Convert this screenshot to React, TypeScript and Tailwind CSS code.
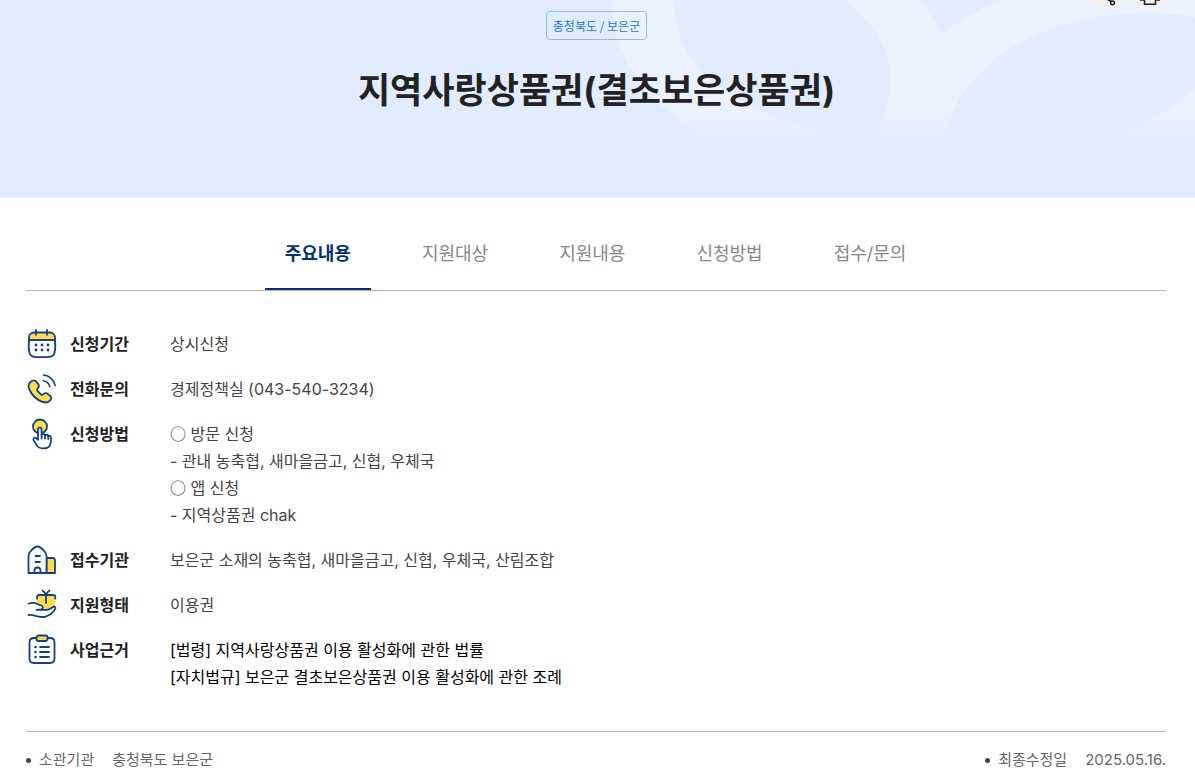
import type { ReactNode } from 'react';

const NAVY = '#12408a';
const YELLOW = '#ffdb4d';

function Icon({ children }: { children: ReactNode }) {
  return (
    <svg
      className="-mt-[3px] size-8 shrink-0"
      viewBox="0 0 32 32"
      fill="none"
      stroke={NAVY}
      strokeWidth="1.8"
      strokeLinecap="round"
      strokeLinejoin="round"
      aria-hidden="true"
    >
      {children}
    </svg>
  );
}

function CalendarIcon() {
  return (
    <Icon>
      <path d="M3 12V9.500a5 5 0 0 1 5-5h16a5 5 0 0 1 5 5V12z" fill={YELLOW} />
      <path d="M3 12C2.500 17 2.500 21 3.500 25c.6 2.400 2 3.500 5 3.800 5 .4 10 .4 15 0 3-.3 4.400-1.400 5-3.800 1-4 1-8 .5-13" />
      <path d="M10 1.800v5M21 1.800v5" />
      <path d="M10 17h.01M16 17h.01M22 17h.01M10 22h.01M16 22h.01M22 22h.01" strokeWidth="2.800" />
    </Icon>
  );
}

function PhoneIcon() {
  return (
    <Icon>
      <path
        d="M4.500 9C7 6.800 9 7 10.500 8.800l2 2.800c1 1.700.2 3-1 4.200-.7.8-.5 1.600.2 2.400l3 3c.8.700 1.600.8 2.400.2 1.300-1.100 2.500-1.900 4.200-.8l2.500 1.900c1.800 1.400 2 3 .4 4.900-2 2.300-5 2.600-8.400 1.200C10.500 26.500 6 22 3.600 17 2 13.800 2.200 11 4.500 9z"
        fill={YELLOW}
      />
      <path d="M17.500 2C23.500 2.500 28 6.800 29.200 12.500M17.200 7.800c3.400.4 5.800 2.600 6.600 6" strokeWidth="1.600" />
    </Icon>
  );
}

function TouchIcon() {
  return (
    <Icon>
      <circle cx="14" cy="8.500" r="7" fill={YELLOW} />
      <path
        d="M12 20V11.500c0-2.600 3.600-2.600 3.600 0V17c.4-1.500 3.200-1.400 3.400.5.6-1.300 3-1 3.200.9.700-1.100 2.900-.7 2.900 1.300 0 2.500 0 5-1 7.100-1 2.400-3.200 3.600-6.500 3.600-3.500 0-5.600-1-7-3.300L7.700 22.500c-.9-1.900.3-3.300 2-2.600l2.300 1.800z"
        fill="#fff"
      />
      <path d="M15.600 17v3.500M19 17.500v3M22.200 18.500v2.500" />
    </Icon>
  );
}

function BuildingIcon() {
  return (
    <Icon>
      <path d="M20.500 14h6c1.800 0 2.500.8 2.500 2.500V29h-8.500z" fill={YELLOW} />
      <path d="M2.500 29V12c0-2 .5-3.300 2-4.700C7 4.500 9 2.500 11.500 2.500s4.500 2 7 4.800c1.500 1.400 2 2.700 2 4.700v17z" fill="#fff" />
      <path d="M9.500 12h4.500M9.500 18h4.500M8.500 29v-2.500a3 3 0 0 1 6 0V29" />
    </Icon>
  );
}

function GiftIcon() {
  return (
    <Icon>
      <path d="M11 9.500C11 7 12 6 14 6h13c2 0 2.500 1 2.500 3L29 18c-1.200 2.600-3 3.500-6 3.500H14l-3-4z" fill={YELLOW} stroke="none" />
      <path d="M11 9.500V8c0-1.400.8-2 2-2h14c1.500 0 2.300.8 2.300 2v1.500M20 6v8M20 6c-.6-2-1.800-3.300-3.500-4.500M20 6c.6-2 1.800-3.300 3.500-4.500" />
      <path
        d="M2.500 14.500c4-1 7-.7 9.500.8 1.200.7 2.500 1 4.500.9h-1c1.500 3 .5 4.500-2 4.500H11h10c2.600-.3 4.400-2 6.500-3 1.500-.6 2.700.8 1.600 2.300C27 23.500 23.500 26.500 19 28c-5.500 1.200-10.500-2-16.500-2z"
        fill="#fff"
        stroke="none"
      />
      <path d="M2.500 14.500c4-1 7-.7 9.500.8 1.200.7 2.200 1 3.500 1.200 2 .7 1.500 3.700-.5 4L10.500 20.800M15 20.800h6c2.600-.3 4.400-2 6.500-3 1.500-.6 2.500.8 1.600 2.300C27 23.800 23.500 26.500 19 27.800c-5.500 1.200-10.500-2.300-16.500-1.800" />
    </Icon>
  );
}

function ClipboardIcon() {
  return (
    <Icon>
      <path d="M10.500 4H8C5 4 3.500 5.500 3.500 8.500v16c0 3 1.500 4.500 4.500 4.500h16c3 0 4.500-1.500 4.500-4.500v-16C28.500 5.500 27 4 24 4h-2.500" />
      <rect x="10.500" y="1.500" width="11" height="5.500" rx="2" fill={YELLOW} />
      <path d="M14 13h9M14 18h9M14 23h9" />
      <path d="M9.500 13h.01M9.500 18h.01M9.500 23h.01" strokeWidth="2.600" />
    </Icon>
  );
}

const tabs = ['주요내용', '지원대상', '지원내용', '신청방법', '접수/문의'];

function Bulleted({ children }: { children: ReactNode }) {
  return (
    <>
      <span className="font-['Noto_Sans_CJK_KR',sans-serif] font-medium leading-none">○</span> {children}
    </>
  );
}

const rows: { label: string; icon: ReactNode; lines: ReactNode[]; link?: boolean }[] = [
  { label: '신청기간', icon: <CalendarIcon />, lines: ['상시신청'] },
  { label: '전화문의', icon: <PhoneIcon />, lines: ['경제정책실 (043-540-3234)'] },
  {
    label: '신청방법',
    icon: <TouchIcon />,
    lines: [
      <Bulleted>방문 신청</Bulleted>,
      '- 관내 농축협, 새마을금고, 신협, 우체국',
      <Bulleted>앱 신청</Bulleted>,
      '- 지역상품권 chak',
    ],
  },
  { label: '접수기관', icon: <BuildingIcon />, lines: ['보은군 소재의 농축협, 새마을금고, 신협, 우체국, 산림조합'] },
  { label: '지원형태', icon: <GiftIcon />, lines: ['이용권'] },
  {
    label: '사업근거',
    icon: <ClipboardIcon />,
    lines: ['[법령] 지역사랑상품권 이용 활성화에 관한 법률', '[자치법규] 보은군 결초보은상품권 이용 활성화에 관한 조례'],
    link: true,
  },
];

function Rings() {
  return (
    <svg className="absolute right-0 top-0" width="595" height="140" viewBox="600 0 595 140" aria-hidden="true">
      <defs>
        <linearGradient id="fade" x1="0" y1="110" x2="0" y2="138" gradientUnits="userSpaceOnUse">
          <stop offset="0" stopColor="#eaf1ff" />
          <stop offset="1" stopColor="#e1ecff" />
        </linearGradient>
      </defs>
      <path d="M612 0C612 55 642 100 708 140H1195V0H1002Q968 13 942 34Q933 15 920 0Z" fill="url(#fade)" />
      <path d="M674 0C675 72 735 116 855 139L870 139C904 92 897 42 845 0Z" fill="#e1ecff" />
      <path d="M946 139C956 60 1060 -3 1195 17V89Q1163 117 1116 139Z" fill="#e1ecff" />
    </svg>
  );
}

export default function App() {
  return (
    <div className="bg-white font-['Inter','Noto_Sans_CJK_KR',sans-serif] text-[#222]">
      <header className="relative flex h-[198px] flex-col items-center bg-[#e1ecff] pr-[2px] pt-[11px]">
        <Rings />
        <div className="absolute right-[29px] top-0 flex gap-[10px]">
          <button aria-label="공유" className="flex h-3 w-8 items-start justify-center overflow-hidden rounded-b-xl bg-[#eff0f4]">
            <svg width="32" height="12" viewBox="0 0 32 12" fill="none" stroke="#222" strokeWidth="1.500" aria-hidden="true">
              <path d="M14.500 -1.500L19 1.500" strokeWidth="2" />
              <circle cx="20.500" cy="2.800" r="1.900" />
            </svg>
          </button>
          <button aria-label="인쇄" className="flex h-3 w-8 items-start justify-center overflow-hidden rounded-b-xl bg-[#eff0f4]">
            <svg width="32" height="12" viewBox="0 0 32 12" fill="none" stroke="#222" strokeWidth="1.500" aria-hidden="true">
              <path d="M6 0h4.500M21.500 0H26M10.500 -2V4.300h11V-2" />
            </svg>
          </button>
        </div>
        <span className="relative flex h-[29px] items-center rounded border border-[#8fbdf0] px-1.5 font-['Noto_Sans_CJK_KR',sans-serif] text-xs text-[#1475e0]">
          충청북도 / 보은군
        </span>
        <h1 className="relative mt-[25px] text-[35px] font-bold leading-[50px]">지역사랑상품권(결초보은상품권)</h1>
      </header>

      <main className="pl-[26px] pr-[29px]">
        <nav className="flex h-[93px] items-end justify-center gap-[31px] border-b border-[#b8b8b8] pr-px">
          {tabs.map((tab, i) => (
            <a
              key={tab}
              href="#"
              className={
                i === 0
                  ? 'flex h-[70px] items-center border-b-2 border-[#052f78] px-5 text-lg font-bold text-[#052f78]'
                  : 'flex h-[70px] items-center border-b-2 border-transparent px-5 text-lg text-[#888]'
              }
            >
              {tab}
            </a>
          ))}
        </nav>

        <dl className="flex flex-col gap-[18px] py-10">
          {rows.map((row) => (
            <div key={row.label} className="flex text-base leading-[27px]">
              <dt className="flex h-[27px] w-36 items-start gap-3 font-bold">
                {row.icon}
                {row.label}
              </dt>
              <dd className={row.link ? 'text-black' : 'text-[#444]'}>
                {row.lines.map((line, i) => (
                  <p key={i}>{row.link ? <a href="#">{line}</a> : line}</p>
                ))}
              </dd>
            </div>
          ))}
        </dl>

        <footer className="flex justify-between border-t border-[#b8b8b8] pt-4 text-[15px] leading-6 text-[#666]">
          <p className="flex items-center">
            <i className="mr-2 size-[5px] rounded-full bg-[#444]" />
            소관기관<span className="ml-[18px]">충청북도 보은군</span>
          </p>
          <p className="flex items-center">
            <i className="mr-2 size-[5px] rounded-full bg-[#444]" />
            최종수정일<span className="ml-[18px]">2025.05.16.</span>
          </p>
        </footer>
      </main>
    </div>
  );
}
